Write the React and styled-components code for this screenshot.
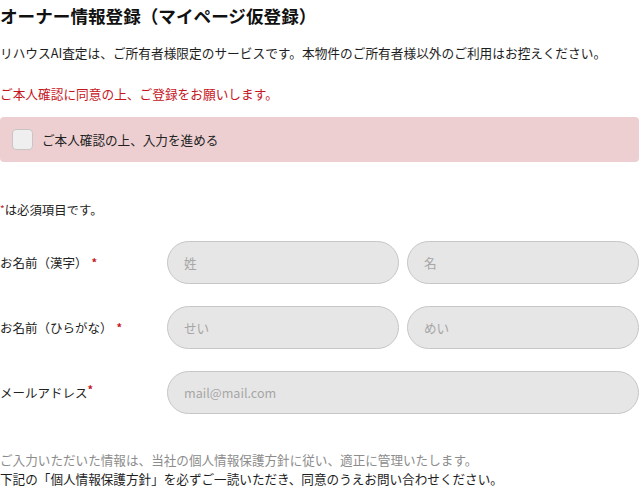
import React from "react";
import styled, { createGlobalStyle } from "styled-components";

const GlobalStyle = createGlobalStyle`
  html, body {
    margin: 0;
    padding: 0;
    background: #fff;
  }
  body {
    font-family: "Noto Sans CJK JP", "Noto Sans", sans-serif;
    color: #222;
  }
`;

const Page = styled.div`
  width: 639px;
  padding-right: 1px;
`;

const Title = styled.h1`
  margin: 0;
  font-size: 17.6px;
  font-weight: 700;
  line-height: 32px;
  color: #111;
`;

const Lead = styled.p`
  margin: 11px 0 0;
  font-size: 12.7px;
  line-height: 20px;
  color: ${(p) => (p.$alert ? "#c5161d" : "#1e1e1e")};
  ${(p) => p.$alert && "margin-top: 21px;"}
`;

const ConfirmBox = styled.label`
  margin-top: 13px;
  height: 45px;
  display: flex;
  align-items: center;
  gap: 9px;
  padding-left: 12px;
  background: #edcfd1;
  border-radius: 4px;
  font-size: 12.6px;
  color: #222;
  cursor: pointer;
`;

const Check = styled.span`
  width: 19px;
  height: 19px;
  border: 1px solid #c9c4c5;
  border-radius: 4px;
  background: #efefef;
`;

const Note = styled.p`
  margin: 38px 0 0;
  font-size: 12.4px;
  line-height: 20px;
`;

const Req = styled.span`
  color: #c5161d;
  font-weight: 700;
  font-size: 11px;
  margin-left: ${(p) => (p.$tight ? "0" : "4px")};
  position: relative;
  top: ${(p) => (p.$tight ? "-4px" : "-1px")};
`;

const NoteReq = styled.span`
  color: #c5161d;
  font-size: 10px;
  position: relative;
  top: -2px;
`;

const Form = styled.div`
  margin-top: 20px;
  display: flex;
  flex-direction: column;
  gap: 22px;
`;

const Row = styled.div`
  display: grid;
  grid-template-columns: 167px 1fr;
  align-items: center;
`;

const Label = styled.span`
  font-size: 12.5px;
  line-height: 20px;
`;

const Fields = styled.div`
  display: grid;
  grid-template-columns: ${(p) => (p.$split ? "1fr 1fr" : "1fr")};
  gap: 8px;
`;

const Input = styled.input`
  box-sizing: border-box;
  height: 43px;
  width: 100%;
  padding: 0 16px;
  border: 1px solid #c6c6c6;
  border-radius: 22px;
  background: #e6e6e6;
  font-family: inherit;
  font-size: 12.6px;
  color: #222;
  outline: none;

  &::placeholder {
    color: #a6a6a6;
  }
`;

const Footer = styled.div`
  margin-top: 36px;
  font-size: 12.6px;
  line-height: 19px;
`;

const Muted = styled.p`
  margin: 0;
  color: ${(p) => (p.$dark ? "#1e1e1e" : "#8c8c8c")};
`;

export default function App() {
  return (
    <Page>
      <GlobalStyle />
      <Title>オーナー情報登録（マイページ仮登録）</Title>
      <Lead>
        リハウスAI査定は、ご所有者様限定のサービスです。本物件のご所有者様以外のご利用はお控えください。
      </Lead>
      <Lead $alert>ご本人確認に同意の上、ご登録をお願いします。</Lead>

      <ConfirmBox>
        <Check />
        ご本人確認の上、入力を進める
      </ConfirmBox>

      <Note>
        <NoteReq>*</NoteReq>は必須項目です。
      </Note>

      <Form>
        <Row>
          <Label>
            お名前（漢字）<Req>*</Req>
          </Label>
          <Fields $split>
            <Input placeholder="姓" />
            <Input placeholder="名" />
          </Fields>
        </Row>
        <Row>
          <Label>
            お名前（ひらがな）<Req>*</Req>
          </Label>
          <Fields $split>
            <Input placeholder="せい" />
            <Input placeholder="めい" />
          </Fields>
        </Row>
        <Row>
          <Label>
            メールアドレス<Req $tight>*</Req>
          </Label>
          <Fields>
            <Input placeholder="mail@mail.com" />
          </Fields>
        </Row>
      </Form>

      <Footer>
        <Muted>
          ご入力いただいた情報は、当社の個人情報保護方針に従い、適正に管理いたします。
        </Muted>
        <Muted $dark>
          下記の「個人情報保護方針」を必ずご一読いただき、同意のうえお問い合わせください。
        </Muted>
      </Footer>
    </Page>
  );
}
